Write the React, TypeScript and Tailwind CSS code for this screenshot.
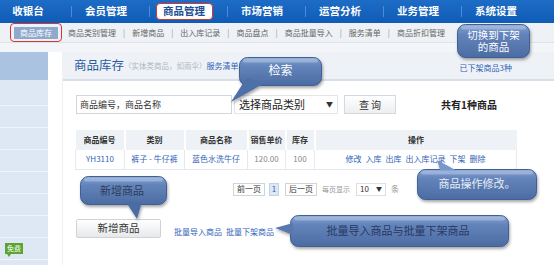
import React from "react";

const navItems = ["收银台", "会员管理", "商品管理", "市场营销", "运营分析", "业务管理", "系统设置"];
const subItems = ["商品类别管理", "新增商品", "出入库记录", "商品盘点", "商品批量导入", "服务清单", "商品折扣管理"];
const actions = ["修改", "入库", "出库", "出入库记录", "下架", "删除"];

type CalloutProps = {
  id: string;
  box: string;
  w: number;
  h: number;
  tail?: string;
  tailColor?: string;
  textClass: string;
  children: React.ReactNode;
};

function Callout({ id, box, w, h, tail, tailColor, textClass, children }: CalloutProps) {
  return (
    <div className={`absolute ${box}`}>
      <svg className="absolute left-0 top-0 overflow-visible" width={w} height={h}>
        <defs>
          <linearGradient id={id} x1="0" y1="0" x2="0" y2="1">
            <stop offset="0" stopColor="#86a3d3" />
            <stop offset="0.3" stopColor="#6384bb" />
            <stop offset="1" stopColor="#4b6ca3" />
          </linearGradient>
          <filter id={`${id}-s`} x="-20%" y="-30%" width="140%" height="170%">
            <feDropShadow dx="1" dy="2" stdDeviation="1.5" floodColor="#000" floodOpacity="0.35" />
          </filter>
        </defs>
        <g filter={`url(#${id}-s)`}>
          <rect x="0.5" y="0.5" width={w - 1} height={h - 1} rx="8" fill={`url(#${id})`} stroke="#3f5e93" />
          {tail && <polygon points={tail} fill={tailColor ?? "#5676ad"} />}
          <rect x="4" y="1.5" width={w - 8} height="4" rx="2" fill="#ffffff" opacity="0.25" />
        </g>
      </svg>
      <div className={`relative flex h-full w-full items-center justify-center text-center ${textClass}`}>
        {children}
      </div>
    </div>
  );
}

export default function App() {
  return (
    <div className="relative h-[265px] w-[554px] overflow-hidden bg-white font-['Noto_Sans_CJK_SC','Liberation_Sans',sans-serif]">
      {/* Top nav */}
      <div className="flex h-[23px] items-center bg-gradient-to-b from-[#1d6cc6] to-[#0f5cb6] pl-0">
        <div className="ml-[-6px] flex items-center">
          {navItems.map((item, i) => (
            <div key={item} className="flex items-center">
              <div className="flex w-[68px] justify-center">
                {item === "商品管理" ? (
                  <div className="flex h-[17px] w-[57px] items-center justify-center rounded-[4px] border-[1.5px] border-[#d9342e] bg-white text-[10.5px] font-bold leading-none text-[#1c4f93]">
                    {item}
                  </div>
                ) : (
                  <span className="text-[10.5px] font-bold leading-none text-white">{item}</span>
                )}
              </div>
              {i < navItems.length - 1 && <div className="ml-[9px] h-[11px] w-px bg-[#4d8bd6]" />}
            </div>
          ))}
        </div>
      </div>

      {/* Sub nav */}
      <div className="flex h-[20px] items-center border-b border-[#dfe4ea] bg-[#eef1f5] pl-[10px]">
        <div className="flex h-[19px] items-center rounded-[4px] border-[1.5px] border-[#d9342e] px-[3px]">
          <div className="flex h-[12px] items-center bg-[#8ea9cc] px-[6px] text-[8px] leading-none text-white">
            商品库存
          </div>
        </div>
        <div className="ml-[6px] flex items-center gap-[7px] text-[8px] leading-none text-[#666]">
          {subItems.map((item, i) => (
            <React.Fragment key={item}>
              {i > 0 && <span className="text-[#999]">|</span>}
              <span>{item}</span>
            </React.Fragment>
          ))}
        </div>
      </div>
      <div className="h-[9px] bg-[#f3f5f8]" />

      {/* Body */}
      <div className="flex">
        {/* Sidebar */}
        <div className="relative h-[213px] w-[48px] bg-[#dde8f4]">
          <div className="h-[28px] bg-[#aac3e0]" />
          <div className="h-[26px] border-b border-[#eef4fa]" />
          {[0, 1, 2, 3, 4, 5, 6].map((r) => (
            <div key={r} className="h-[22px] border-b border-[#eef4fa]" />
          ))}
          <div className="absolute left-[5px] top-[191px] flex h-[11px] items-center bg-[#5ba42f] px-[2px] text-[7px] leading-none text-white">
            免费
          </div>
          <div className="absolute left-[7px] top-[202px] h-0 w-0 border-l-[2px] border-r-[2px] border-t-[3px] border-l-transparent border-r-transparent border-t-[#5ba42f]" />
        </div>

        {/* Main */}
        <div className="ml-[14px] flex-1 border-l border-[#edf1f5]">
          <div className="flex h-[29px] items-center border-b-2 border-[#d6dee8] bg-[#eef2f7] pl-[11px]">
            <span className="text-[12.5px] leading-none text-[#2c5aa0]">商品库存</span>
            <span className="text-[7.5px] leading-none text-[#b0b7c0]">（实体类商品，如雨伞）</span>
            <span className="text-[8px] leading-none text-[#2f63b8]">服务清单</span>
            <span className="ml-auto mr-[42px] mt-[4px] text-[8px] leading-none text-[#2f63b8]">已下架商品3种</span>
          </div>

          <div className="pl-[12px]">
            {/* Search */}
            <div className="mt-[14px] flex h-[19px] items-center">
              <div className="ml-[1px] flex h-[19px] w-[156px] items-center border border-[#d3d7dc] pl-[3px] text-[9px] text-[#333]">
                商品编号，商品名称
              </div>
              <div className="ml-[2px] flex h-[19px] w-[104px] items-center justify-between border border-[#e3e5e8] pl-[4px] pr-[4px] text-[11px] text-[#222]">
                <span className="leading-none">选择商品类别</span>
                <span className="text-[7px] leading-none text-[#333]">▼</span>
              </div>
              <div className="ml-[6px] flex h-[19px] w-[52px] items-center justify-center border border-[#d5d8dc] bg-gradient-to-b from-white to-[#eceef0] text-[10px] text-[#333]">
                查 询
              </div>
              <div className="ml-[45px] text-[10px] font-bold text-[#222]">共有1种商品</div>
            </div>

            {/* Table */}
            <table className="mt-[16px] w-[442px] border-collapse text-[8px] leading-none">
              <thead>
                <tr className="h-[20px] bg-[#eef2f6] font-bold text-[#333]">
                  <th className="w-[49px] border-r-2 border-white">商品编号</th>
                  <th className="w-[60px] border-r-2 border-white">类别</th>
                  <th className="w-[63px] border-r-2 border-white">商品名称</th>
                  <th className="w-[38px] border-r-2 border-white">销售单价</th>
                  <th className="w-[29px] border-r-2 border-white">库存</th>
                  <th>操作</th>
                </tr>
              </thead>
              <tbody>
                <tr className="h-[19px] border-b border-[#e3e8ee] text-center">
                  <td className="border-l border-r border-[#e6eaef] text-[#2f63b8]">YH3110</td>
                  <td className="border-r border-[#e6eaef] text-[#2f63b8]">裤子 - 牛仔裤</td>
                  <td className="border-r border-[#e6eaef] text-[#2f63b8]">蓝色水洗牛仔</td>
                  <td className="border-r border-[#e6eaef] text-[#888]">120.00</td>
                  <td className="border-r border-[#e6eaef] text-[#888]">100</td>
                  <td className="border-r border-[#e6eaef] text-[#2f63b8]">
                    <div className="flex justify-center gap-[4px]">
                      {actions.map((a) => (
                        <span key={a}>{a}</span>
                      ))}
                    </div>
                  </td>
                </tr>
              </tbody>
            </table>

            {/* Pagination */}
            <div className="ml-[158px] mt-[13px] flex items-center text-[8px] leading-none">
              <div className="flex h-[13px] items-center border border-[#cfd4da] px-[3px] text-[#333]">前一页</div>
              <div className="ml-[4px] flex h-[13px] w-[10px] items-center justify-center border border-[#c3d3e6] bg-[#dde8f5] text-[#2f63b8]">1</div>
              <div className="ml-[6px] flex h-[13px] items-center border border-[#cfd4da] px-[3px] text-[#333]">后一页</div>
              <span className="ml-[5px] text-[7px] text-[#999]">每页显示</span>
              <div className="ml-[6px] flex h-[13px] w-[30px] items-center justify-between border border-[#dcdfe3] px-[3px] text-[#333]">
                <span>10</span>
                <span className="text-[6px]">▼</span>
              </div>
              <span className="ml-[5px] text-[#999]">条</span>
            </div>

            {/* Add buttons */}
            <div className="mt-[23px] flex items-center">
              <div className="ml-[1px] flex h-[19px] w-[85px] items-center justify-center rounded-[2px] border border-[#cfd3d8] bg-gradient-to-b from-white to-[#e6e8ea] text-[10.5px] text-[#333]">
                新增商品
              </div>
              <div className="ml-[13px] mt-[7px] flex gap-[4px] text-[8px] leading-none text-[#2f63b8]">
                <span>批量导入商品</span>
                <span>批量下架商品</span>
              </div>
            </div>
          </div>
        </div>
      </div>

      {/* Callouts */}
      <Callout id="c1" box="left-[457px] top-[24px] w-[73px] h-[34px]" w={73} h={34} textClass="text-[10.5px] leading-[12px] text-white">
        切换到下架
        <br />
        的商品
      </Callout>
      <Callout
        id="c2"
        box="left-[239px] top-[57px] w-[83px] h-[29px]"
        w={83}
        h={29}
        tail="8,20 24,27 -8,45"
        tailColor="#4e6fa6"
        textClass="pb-[4px] text-[12px] text-white"
      >
        检索
      </Callout>
      <Callout
        id="c3"
        box="left-[417px] top-[169px] w-[120px] h-[31px]"
        w={120}
        h={31}
        tail="24,4 44,4 20,-9"
        tailColor="#7897cb"
        textClass="pb-[2px] text-[11px] text-[#e8eef7]"
      >
        商品操作修改。
      </Callout>
      <Callout
        id="c4"
        box="left-[80px] top-[176px] w-[87px] h-[29px]"
        w={87}
        h={29}
        tail="46,26 62,26 57,43"
        tailColor="#4c6ca3"
        textClass="pr-[3px] text-[11px] text-[#2e3d5c]"
      >
        新增商品
      </Callout>
      <Callout
        id="c5"
        box="left-[290px] top-[215px] w-[219px] h-[32px]"
        w={219}
        h={32}
        tail="3,8 3,20 -15,13"
        tailColor="#5878ae"
        textClass="pb-[2px] pr-[3px] text-[11px] text-[#2a3862]"
      >
        批量导入商品与批量下架商品
      </Callout>
    </div>
  );
}
